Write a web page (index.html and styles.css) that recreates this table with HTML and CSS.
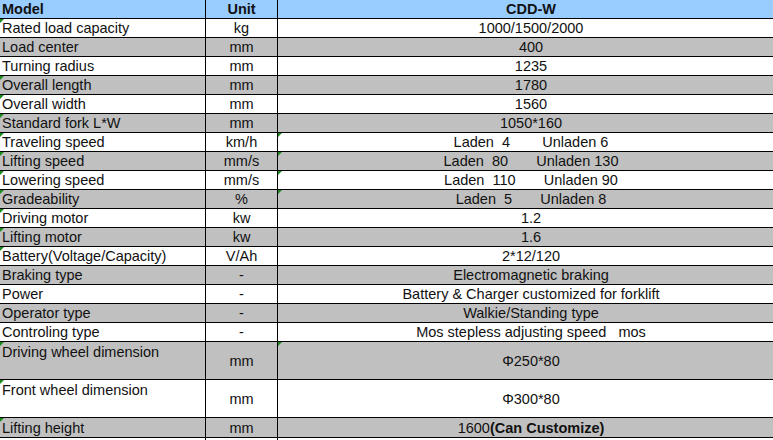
FILE: index.html
```html
<!DOCTYPE html>
<html>
<head>
<meta charset="utf-8">
<link rel="stylesheet" href="styles.css">
</head>
<body>
<div class="sheet">
  <div class="row head"><div class="c label">Model</div><div class="c unit">Unit</div><div class="c val">CDD-W</div></div>
  <div class="row"><div class="c label tri">Rated load capacity</div><div class="c unit">kg</div><div class="c val">1000/1500/2000</div></div>
  <div class="row gray"><div class="c label">Load center</div><div class="c unit">mm</div><div class="c val">400</div></div>
  <div class="row"><div class="c label">Turning radius</div><div class="c unit">mm</div><div class="c val">1235</div></div>
  <div class="row gray"><div class="c label tri">Overall length</div><div class="c unit">mm</div><div class="c val">1780</div></div>
  <div class="row"><div class="c label tri">Overall width</div><div class="c unit">mm</div><div class="c val">1560</div></div>
  <div class="row gray"><div class="c label tri">Standard fork L*W</div><div class="c unit">mm</div><div class="c val">1050*160</div></div>
  <div class="row"><div class="c label tri">Traveling speed</div><div class="c unit">km/h</div><div class="c val tri pre">Laden  4        Unladen 6</div></div>
  <div class="row gray"><div class="c label tri">Lifting speed</div><div class="c unit">mm/s</div><div class="c val tri pre">Laden  80       Unladen 130</div></div>
  <div class="row"><div class="c label tri">Lowering speed</div><div class="c unit">mm/s</div><div class="c val tri pre">Laden  110       Unladen 90</div></div>
  <div class="row gray"><div class="c label tri">Gradeability</div><div class="c unit">%</div><div class="c val tri pre">Laden  5       Unladen 8</div></div>
  <div class="row"><div class="c label tri">Driving motor</div><div class="c unit">kw</div><div class="c val">1.2</div></div>
  <div class="row gray"><div class="c label tri">Lifting motor</div><div class="c unit">kw</div><div class="c val">1.6</div></div>
  <div class="row"><div class="c label tri">Battery(Voltage/Capacity)</div><div class="c unit">V/Ah</div><div class="c val">2*12/120</div></div>
  <div class="row gray"><div class="c label">Braking type</div><div class="c unit">-</div><div class="c val">Electromagnetic braking</div></div>
  <div class="row"><div class="c label">Power</div><div class="c unit">-</div><div class="c val">Battery &amp; Charger customized for forklift</div></div>
  <div class="row gray"><div class="c label">Operator type</div><div class="c unit">-</div><div class="c val">Walkie/Standing type</div></div>
  <div class="row"><div class="c label">Controling type</div><div class="c unit">-</div><div class="c val pre">Mos stepless adjusting speed   mos</div></div>
  <div class="row gray tall"><div class="c label tri top">Driving wheel dimension</div><div class="c unit">mm</div><div class="c val tri">Φ250*80</div></div>
  <div class="row tall"><div class="c label tri top">Front wheel dimension</div><div class="c unit">mm</div><div class="c val">Φ300*80</div></div>
  <div class="row gray last"><div class="c label tri">Lifting height</div><div class="c unit">mm</div><div class="c val">1600<b>(Can Customize)</b></div></div>
  <div class="row"><div class="c label"></div><div class="c unit"></div><div class="c val"></div></div>
</div>
</body>
</html>
```

FILE: styles.css
```css
html, body {
  margin: 0;
  padding: 0;
  background: #ffffff;
  overflow: hidden;
}
.sheet {
  width: 784px;
  font-family: "Liberation Sans", Arial, sans-serif;
  font-size: 14.5px;
  color: #111;
}
.row {
  display: grid;
  grid-template-columns: 206px 72px 506px;
  height: 19px;
  background: #ffffff;
}
.row.head {
  height: 19px;
  background: #99ccff;
  font-weight: bold;
}
.row.gray {
  background: #c0c0c0;
}
.row.tall {
  height: 38px;
}
.row.last {
  height: 20px;
}
.c {
  position: relative;
  border-right: 1px solid #000;
  border-bottom: 1px solid #000;
  line-height: 18px;
  white-space: nowrap;
  overflow: hidden;
  display: flex;
  align-items: center;
}
.label {
  padding-left: 2px;
}
.unit {
  justify-content: center;
}
.val {
  justify-content: center;
  border-right: none;
}
.pre {
  white-space: pre;
}
.top {
  align-items: flex-start;
  padding-top: 1px;
}
.head .label {
  padding-left: 2px;
}
.tri::before {
  content: "";
  position: absolute;
  left: 0;
  top: 0;
  border-top: 4px solid #1a8c1a;
  border-right: 4px solid transparent;
}
```
